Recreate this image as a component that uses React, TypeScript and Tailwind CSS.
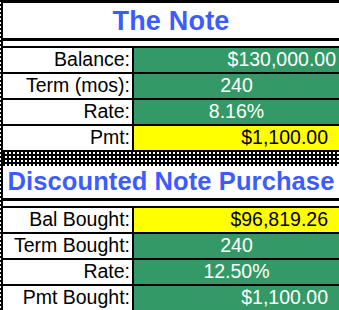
import React from "react";

type Row = {
  label: string;
  value: string;
  tone: "green" | "yellow";
  align: "center" | "right";
  pr?: string;
};

const noteRows: Row[] = [
  { label: "Balance:", value: "$130,000.00", tone: "green", align: "right", pr: "pr-[3px]" },
  { label: "Term (mos):", value: "240", tone: "green", align: "center" },
  { label: "Rate:", value: "8.16%", tone: "green", align: "center" },
  { label: "Pmt:", value: "$1,100.00", tone: "yellow", align: "right", pr: "pr-[11px]" },
];

const purchaseRows: Row[] = [
  { label: "Bal Bought:", value: "$96,819.26", tone: "yellow", align: "right", pr: "pr-[11px]" },
  { label: "Term Bought:", value: "240", tone: "green", align: "center" },
  { label: "Rate:", value: "12.50%", tone: "green", align: "center" },
  { label: "Pmt Bought:", value: "$1,100.00", tone: "green", align: "right", pr: "pr-[11px]" },
];

function Checker() {
  return (
    <div className="h-[14px] bg-black bg-[repeating-conic-gradient(#fff_0_25%,#000_0_100%)] bg-[length:4px_4px]" />
  );
}

function DataRow({ row, last }: { row: Row; last?: boolean }) {
  const cell =
    row.tone === "green" ? "bg-[#339966] text-white" : "bg-[#ffff00] text-black";
  return (
    <>
      <div className="flex h-[24px]">
        <div className="flex w-[129px] items-center justify-end pr-[2px] text-black">
          {row.label}
        </div>
        <div className="w-[2px] bg-black" />
        <div
          className={`flex flex-1 items-center ${cell} ${
            row.align === "center" ? "justify-center" : "justify-end"
          } ${row.pr ?? ""}`}
        >
          {row.value}
        </div>
      </div>
      {!last && <div className="h-[2px] bg-black" />}
    </>
  );
}

function Section({
  title,
  titleClass,
  titleH,
  rows,
  closed,
}: {
  title: string;
  titleClass: string;
  titleH: string;
  rows: Row[];
  closed?: boolean;
}) {
  return (
    <div className="flex flex-col">
      <div className={`flex ${titleH} items-center justify-center bg-white`}>
        <span className={`font-bold text-[#3d5cff] ${titleClass}`}>{title}</span>
      </div>
      <div className="h-[3px] bg-black" />
      <div className="h-[5px] bg-white" />
      <div className="h-[2px] bg-black" />
      {rows.map((r, i) => (
        <DataRow key={r.label} row={r} last={i === rows.length - 1 && !closed} />
      ))}
    </div>
  );
}

export default function App() {
  return (
    <div
      className="flex h-[310px] w-[339px] overflow-hidden bg-white text-[19.5px] leading-none"
      style={{ fontFamily: '"Liberation Sans", Arial, sans-serif' }}
    >
      <div className="w-[1px] bg-[repeating-linear-gradient(to_bottom,#000_0_2px,#fff_2px_4px)]" />
      <div className="w-[2px] bg-black" />
      <div className="flex min-w-0 flex-1 flex-col">
        <div className="h-[3px] bg-black" />
        <Section
          title="The Note"
          titleClass="text-[27px] tracking-[0.2px] pt-[1px]"
          titleH="h-[35px]"
          rows={noteRows}
          closed
        />
        <Checker />
        <Section
          title="Discounted Note Purchase"
          titleClass="text-[25.5px] tracking-[0.1px]"
          titleH="h-[32px]"
          rows={purchaseRows}
        />
      </div>
    </div>
  );
}
